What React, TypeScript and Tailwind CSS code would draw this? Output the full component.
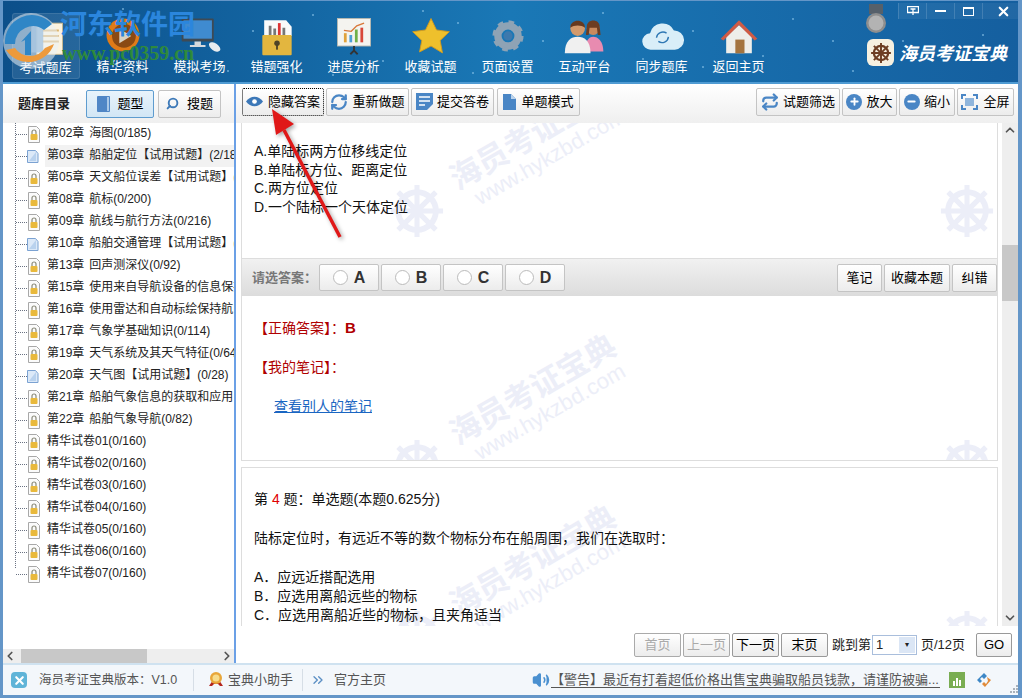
import { ChevronDown, ChevronLeft, ChevronRight, ChevronUp, ChevronsRight, Minus, Plus, RefreshCw, Repeat, Search, Volume2, X } from 'lucide-react';

const font = 'font-["Liberation_Sans","Noto_Sans_CJK_SC",sans-serif]';

const navItems = ['考试题库', '精华资料', '模拟考场', '错题强化', '进度分析', '收藏试题', '页面设置', '互动平台', '同步题库', '返回主页'];

const chapters = [
  ['第02章 海图(0/185)', true],
  ['第03章 船舶定位【试用试题】(2/185)', false],
  ['第05章 天文船位误差【试用试题】(0/120)', true],
  ['第08章 航标(0/200)', true],
  ['第09章 航线与航行方法(0/216)', true],
  ['第10章 船舶交通管理【试用试题】(0/90)', false],
  ['第13章 回声测深仪(0/92)', true],
  ['第15章 使用来自导航设备的信息保持航向', true],
  ['第16章 使用雷达和自动标绘保持航向', true],
  ['第17章 气象学基础知识(0/114)', true],
  ['第19章 天气系统及其天气特征(0/64)', true],
  ['第20章 天气图【试用试题】(0/28)', false],
  ['第21章 船舶气象信息的获取和应用', true],
  ['第22章 船舶气象导航(0/82)', true],
  ['精华试卷01(0/160)', true],
  ['精华试卷02(0/160)', true],
  ['精华试卷03(0/160)', true],
  ['精华试卷04(0/160)', true],
  ['精华试卷05(0/160)', true],
  ['精华试卷06(0/160)', true],
  ['精华试卷07(0/160)', true],
] as const;

const dots = [[120, 8], [250, 30], [310, 14], [380, 60], [455, 22], [540, 40], [600, 12], [690, 30], [760, 55], [790, 18], [830, 40], [850, 70], [700, 66], [470, 72], [130, 74], [560, 70], [640, 58], [900, 40], [980, 34], [420, 10], [330, 74], [225, 70]];

const btn = 'flex items-center justify-center rounded-[2px] border border-[#c4c4c4] bg-gradient-to-b from-white to-[#ececec] text-[13px] text-black whitespace-nowrap';

function NavIcon({ index }: { index: number }) {
  const size = 44;
  if (index === 0) return (
    <svg width={size} height={size} viewBox="0 0 48 48"><rect x="14" y="10" width="28" height="34" fill="#fbf3e0" stroke="#c9b78f" /><path d="M20 18h18M20 24h18M20 30h18" stroke="#d9b26a" strokeWidth="2" /><rect x="8" y="6" width="13" height="36" fill="#5d95c9" opacity=".85" /></svg>
  );
  if (index === 1) return (
    <svg width={size} height={size} viewBox="0 0 48 48"><circle cx="24" cy="24" r="18" fill="#e07b18" /><circle cx="25" cy="25" r="13" fill="#8a4a14" /><path d="M20 17l13 8-13 8z" fill="#d9d2c2" /></svg>
  );
  if (index === 2) return (
    <svg width={size} height={size} viewBox="0 0 48 48"><rect x="4" y="6" width="35" height="25" rx="1" fill="#3e4a55" /><rect x="6" y="8" width="31" height="20" fill="#3f8bd0" /><path d="M18 31h7v4h5v2H13v-2h5z" fill="#d5d9dd" /><ellipse cx="40" cy="37" rx="7" ry="4" transform="rotate(35 40 37)" fill="#e8ecef" /></svg>
  );
  if (index === 3) return (
    <svg width={size} height={size} viewBox="0 0 48 48"><path d="M10 8h24l6 7v10H10z" fill="#fafafa" /><path d="M15 24V14h3v10zM20 24V17h3v7zM30 24V16h3v8z" fill="#777" /><path d="M25 24V11h3v13z" fill="#d33" /><rect x="8" y="24" width="32" height="22" rx="1" fill="#e3b63f" /><circle cx="24" cy="33" r="3" fill="#4f4326" /><rect x="23" y="34" width="2" height="6" fill="#4f4326" /></svg>
  );
  if (index === 4) return (
    <svg width={size} height={size} viewBox="0 0 48 48"><rect x="6" y="6" width="36" height="30" fill="#f4f4f0" stroke="#b9b9b0" /><path d="M13 22v10h3V22z" fill="#e0a23a" /><path d="M19 24v8h3v-8z" fill="#4d9fd6" /><path d="M25 18v14h3V18z" fill="#6fb04a" /><path d="M31 16v16h3V16z" fill="#d8483a" /><path d="M13 19l8 1 6-6 8-3" fill="none" stroke="#d8783a" strokeWidth="1.500" /><path d="M24 36v6M20 45l4-4 4 4" stroke="#333" strokeWidth="2" fill="none" /></svg>
  );
  if (index === 5) return (
    <svg width={size} height={size} viewBox="0 0 48 48"><path d="M24 6l6 12.500 14 1.900-10 9.600 2.500 13.500L24 36l-12.500 6.500L14 30 4 20.400l14-1.900z" fill="#eec02c" stroke="#d39a1c" /></svg>
  );
  if (index === 6) return (
    <svg width={size} height={size} viewBox="0 0 48 48"><circle cx="24" cy="25" r="11" fill="none" stroke="#8ea3b5" strokeWidth="8" /><circle cx="24" cy="25" r="15" fill="none" stroke="#8ea3b5" strokeWidth="4" strokeDasharray="6 5.800" /><circle cx="24" cy="25" r="5" fill="#3d79ad" /></svg>
  );
  if (index === 7) return (
    <svg width={size} height={size} viewBox="0 0 48 48"><circle cx="33" cy="17" r="7" fill="#c98a5e" /><path d="M26 15c0-9 14-9 14 0l1 9h-3l-1-8h-8l-1 8h-3z" fill="#6d3d22" /><path d="M24 42c0-11 4-16 9-16s11 5 11 16z" fill="#e88bb0" /><circle cx="16" cy="17" r="8" fill="#d29a6c" /><path d="M8 16c0-10 16-10 16 0-4-3-12-3-16 0z" fill="#65391f" /><path d="M2 44c0-14 7-18 14-18s14 4 14 18z" fill="#f0f0f0" /></svg>
  );
  if (index === 8) return (
    <svg width={size} height={size} viewBox="0 0 48 48"><path d="M12 40a9 9 0 01-1-18 14 14 0 0126-3 10.500 10.500 0 011 21z" fill="#d9eef8" /><path d="M18 27a7 7 0 0111-5M31 26a7 7 0 01-11 5" fill="none" stroke="#2f78b4" strokeWidth="1.500" /></svg>
  );
  return (
    <svg width={size} height={size} viewBox="0 0 48 48"><path d="M10 26v18h28V26L24 13z" fill="#eeeeea" /><path d="M4 28L24 8l20 20-3 2L24 13 7 30z" fill="#cf5b45" /><rect x="20" y="29" width="10" height="15" fill="#a4743f" /></svg>
  );
}

function Lock() {
  return (
    <svg width="14" height="17" viewBox="0 0 14 17" className="shrink-0">
      <path d="M1.500.500h8l3 3v13h-11z" fill="#fbfbfb" stroke="#a8a8a8" />
      <path d="M5 8V6a2 2 0 014 0v2" fill="none" stroke="#8a8a7a" strokeWidth="1.200" />
      <rect x="3.500" y="8" width="7" height="6" rx="1" fill="#e9b93c" />
    </svg>
  );
}

function Doc() {
  return (
    <svg width="14" height="17" viewBox="0 0 14 17" className="shrink-0">
      <path d="M.500 2.500h8l2.500 3v9H.500z" fill="#dce9f8" stroke="#7ba2d2" />
      <path d="M2 13l7-9v9z" fill="#b9d2ee" />
    </svg>
  );
}

function Wheel({ size }: { size: number }) {
  return (
    <svg width={size} height={size} viewBox="0 0 40 40">
      <circle cx="20" cy="20" r="13" fill="none" stroke="currentColor" strokeWidth="4" />
      <circle cx="20" cy="20" r="4.500" fill="currentColor" />
      <path d="M20 2v36M2 20h36M7 7l26 26M33 7L7 33" stroke="currentColor" strokeWidth="3.500" />
    </svg>
  );
}

// zero-size anchor sits on the wheel centre, text is hung off it
function Mark({ className }: { className: string }) {
  return (
    <div className={`absolute h-0 w-0 text-[#eceef8] ${className}`}>
      <div className="absolute -left-[29px] -top-[29px]"><Wheel size={58} /></div>
      <span className="absolute left-[116px] -top-[76px] -translate-x-1/2 -translate-y-1/2 -rotate-30 whitespace-nowrap text-[31px] font-bold leading-none">海员考证宝典</span>
      <span className="absolute left-[133px] -top-[54px] -translate-x-1/2 -translate-y-1/2 -rotate-30 whitespace-nowrap text-[22px] leading-none">www.hykzbd.com</span>
    </div>
  );
}

export default function App() {
  return (
    <div className={`${font} relative flex h-[698px] w-[1022px] flex-col overflow-hidden bg-[#6496c8] pb-[3px] pl-[3px] pr-[4px] pt-px`}>
      {/* header */}
      <header className="relative flex h-[81px] shrink-0 overflow-hidden bg-gradient-to-r from-[#0c4f8a] via-[#1a78b6] to-[#155f9f] pl-[4px] pt-[12px]">
        <svg className="absolute left-0 top-0" width="1016" height="81">
          {dots.map(([x, y]) => <circle key={`${x}-${y}`} cx={x} cy={y} r="1" fill="#8fc8ec" opacity=".7" />)}
        </svg>
        <div className="relative flex">
          {navItems.map((item, i) => (
            <div key={item} className="flex w-[77px] justify-center">
              <div className={`flex h-[66px] w-[68px] flex-col items-center rounded-[3px] ${i === 0 ? 'border border-white/10 bg-white/10' : ''}`}>
                <div className="flex h-[44px] shrink-0 items-center">
                  <NavIcon index={i} />
                </div>
                <span className="text-[13px] leading-5 text-white">{item}</span>
              </div>
            </div>
          ))}
        </div>
        <div className="absolute right-0 top-[2px] flex h-4 text-white">
          <div className="flex h-[16px] w-7 items-center justify-center border-l border-white/15 bg-white/5">
            <svg width="12" height="10" viewBox="0 0 12 10"><path d="M.500.500h11v6H.500zM6 3v6M3.500 3h5" fill="none" stroke="#fff" strokeWidth="1.300" /></svg>
          </div>
          <div className="flex h-[16px] w-7 items-center justify-center border-l border-white/15 bg-white/5"><div className="h-[2px] w-[11px] bg-white" /></div>
          <div className="flex h-[16px] w-7 items-center justify-center border-l border-white/15 bg-white/5"><div className="h-[9px] w-[11px] border border-t-2 border-white" /></div>
          <div className="flex h-[16px] w-9 items-center justify-center border-l border-white/15 bg-white/5 pl-[5px]"><X size={15} strokeWidth={3.500} /></div>
        </div>
        {/* medal */}
        <svg className="absolute left-[863px] top-[3px]" width="20" height="30" viewBox="0 0 20 30">
          <path d="M3 0h14v10H3z" fill="#56606a" />
          <circle cx="10" cy="19" r="10" fill="#8e8e8e" />
          <circle cx="10" cy="19" r="7.500" fill="#b3b3b3" />
        </svg>
        <div className="absolute left-[864px] top-[38px] flex h-[27px] w-[27px] items-center justify-center rounded-md bg-[#f6f0e0] text-[#6d3d22]">
          <Wheel size={22} />
        </div>
        <span className="absolute left-[896px] top-[43px] text-[18px] font-semibold italic leading-5 text-white">海员考证宝典</span>
      </header>

      <div className="flex min-h-0 flex-1 border-t-2 border-[#4f9bd3]">
        {/* sidebar */}
        <aside className="flex w-[233px] shrink-0 flex-col border-r-2 border-[#6ba0e6] bg-white">
          <div className="flex h-[39px] shrink-0 items-center gap-[4px] bg-gradient-to-b from-white to-[#efefef] pl-[15px]">
            <span className="mr-[12px] text-[13px] font-bold text-[#222]">题库目录</span>
            <div className={`${btn} h-7 w-[68px] gap-2 !border-[#5e9ccf] !from-[#e8f3fb] !to-[#d2e6f5]`}>
              <svg width="13" height="16" viewBox="0 0 13 16"><rect width="13" height="16" rx="1" fill="#4f86c6" /><rect x="10" y="1" width="2" height="14" fill="#a9c8e8" /></svg>
              题型
            </div>
            <div className={`${btn} h-7 w-[63px] gap-2`}>
              <Search size={13} strokeWidth={3.500} className="-scale-x-100 text-[#3d79b8]" />搜题
            </div>
          </div>
          <div className="relative min-h-0 flex-1 overflow-hidden pl-[13px]">
            <div className="absolute bottom-[81px] left-[12px] top-0 border-l border-dotted border-gray-500" />
            {chapters.map(([label, locked], i) => (
              <div key={label} className="flex h-[22px] items-center">
                <div className="w-[11px] shrink-0 border-t border-dotted border-gray-500" />
                {locked ? <Lock /> : <Doc />}
                <span className={`ml-[4px] h-[22px] flex-1 overflow-hidden whitespace-pre pl-[2px] text-[12px] leading-[21px] text-[#222] [word-spacing:1.500px] ${i === 1 ? 'bg-[#f2f2f2]' : ''}`}>{label}</span>
              </div>
            ))}
          </div>
          <div className="flex h-[14px] shrink-0 items-center bg-[#eeeeee] text-[#555]">
            <ChevronLeft size={14} strokeWidth={3} />
            <div className="ml-[4px] h-full w-[126px] bg-[#c8c8c8]" />
            <ChevronRight size={14} strokeWidth={3} className="ml-auto" />
          </div>
        </aside>

        {/* main */}
        <main className="flex min-w-0 flex-1 flex-col bg-white">
          <div className="flex h-[39px] shrink-0 items-center justify-between bg-gradient-to-b from-white to-[#efefef] pb-[4px] pl-[6px] pr-[4px]">
            <div className="flex gap-[2px]">
              <div className={`${btn} h-7 w-[82px] gap-[5px] !border-dotted !border-black`}>
                <svg width="17" height="11" viewBox="0 0 16 10"><path d="M0 5c4-6 12-6 16 0-4 6-12 6-16 0z" fill="#3c78b8" /><circle cx="8" cy="5" r="2.200" fill="#fff" /></svg>
                隐藏答案
              </div>
              <div className={`${btn} h-7 w-[83px] gap-1`}><RefreshCw size={18} strokeWidth={3} className="text-[#4a86c5]" />重新做题</div>
              <div className={`${btn} h-7 w-[83px] gap-1`}>
                <svg width="17" height="17" viewBox="0 0 17 17"><path d="M0 0h17v11l-6 6H0z" fill="#4a86c5" /><path d="M3 4h11M3 8h11M3 12h6" stroke="#fff" strokeWidth="1.300" /></svg>
                提交答卷
              </div>
              <div className={`${btn} ml-px h-7 w-[83px] gap-[5px]`}>
                <svg width="13" height="16" viewBox="0 0 13 16"><path d="M0 0h8l5 5v11H0z" fill="#4a86c5" /><path d="M8 0v5h5z" fill="#bcd4ec" /></svg>
                单题模式
              </div>
            </div>
            <div className="flex gap-[2px]">
              <div className={`${btn} h-7 w-[84px] gap-1`}><Repeat size={18} strokeWidth={3} className="text-[#4a86c5]" />试题筛选</div>
              <div className={`${btn} h-7 w-[55px] gap-1`}><span className="flex h-4 w-4 items-center justify-center rounded-full bg-[#4a86c5] text-white"><Plus size={11} strokeWidth={4} /></span>放大</div>
              <div className={`${btn} h-7 w-[56px] gap-1`}><span className="flex h-4 w-4 items-center justify-center rounded-full bg-[#4a86c5] text-white"><Minus size={11} strokeWidth={4} /></span>缩小</div>
              <div className={`${btn} h-7 w-[57px] gap-[5px]`}>
                <svg width="17" height="16" viewBox="0 0 17 16"><path d="M1 5V1h4M12 1h4v4M16 11v4h-4M5 15H1v-4" fill="none" stroke="#4a86c5" strokeWidth="2" /><rect x="4" y="4" width="9" height="8" fill="#8fb5dc" /></svg>
                全屏
              </div>
            </div>
          </div>

          <div className="flex min-h-0 flex-1 pl-[5px]">
            <div className="flex min-w-0 flex-1 flex-col">
              {/* current question */}
              <div className="flex h-[338px] shrink-0 flex-col border border-t-0 border-[#dddddd]">
                <div className="relative h-[135px] shrink-0 overflow-hidden">
                  <Mark className="left-[175px] top-[88px]" />
                  <Mark className="left-[725px] top-[88px]" />
                  <div className="relative pl-[12px] pt-[19px] text-[14px] leading-[18.500px] text-[#111]">
                    <p>A.单陆标两方位移线定位</p>
                    <p>B.单陆标方位、距离定位</p>
                    <p>C.两方位定位</p>
                    <p>D.一个陆标一个天体定位</p>
                  </div>
                </div>
                <div className="flex h-[38px] shrink-0 items-center justify-between border-t border-[#dddddd] bg-gradient-to-b from-[#f1f1f1] to-[#dcdcdc] pl-[10px]">
                  <div className="flex items-center gap-[2px]">
                    <span className="text-[13px] font-bold text-[#777]">请选答案：</span>
                    {['A', 'B', 'C', 'D'].map(o => (
                      <div key={o} className={`${btn} h-[27px] w-[60px] gap-[6px] !text-[16px] font-bold !text-[#333]`}>
                        <span className="h-[15px] w-[15px] rounded-full border border-[#bbbbbb] bg-white" />{o}
                      </div>
                    ))}
                  </div>
                  <div className="flex gap-[2px]">
                    <div className={`${btn} h-[28px] w-[45px]`}>笔记</div>
                    <div className={`${btn} h-[28px] w-[66px]`}>收藏本题</div>
                    <div className={`${btn} h-[28px] w-[45px]`}>纠错</div>
                  </div>
                </div>
                <div className="relative min-h-0 flex-1 overflow-hidden">
                  <Mark className="left-[175px] top-[170px]" />
                  <Mark className="left-[725px] top-[170px]" />
                  <div className="relative pl-[12px] pt-[22px] text-[14px] leading-5">
                    <p className="text-[#b00000]">【正确答案】：<span className="text-[15px] font-bold">B</span></p>
                    <p className="mt-[19px] text-[#b00000]">【我的笔记】：</p>
                    <p className="ml-[20px] mt-[19px] text-[#1a66c2] underline">查看别人的笔记</p>
                  </div>
                </div>
              </div>
              {/* next question */}
              <div className="relative mt-[6px] min-h-0 flex-1 overflow-hidden border border-b-0 border-[#dddddd]">
                <Mark className="left-[175px] top-[169px]" />
                <Mark className="left-[725px] top-[169px]" />
                <div className="relative pl-[12px] pt-[22px] text-[14px] leading-[19px] text-[#111]">
                  <p>第 <span className="text-[#e00000]">4</span> 题：单选题(本题0.625分)</p>
                  <p className="mt-[20px]">陆标定位时，有远近不等的数个物标分布在船周围，我们在选取时：</p>
                  <p className="mt-[20px]">A．应远近搭配选用</p>
                  <p>B．应选用离船远些的物标</p>
                  <p>C．应选用离船近些的物标，且夹角适当</p>
                </div>
              </div>
            </div>
            <div className="ml-1 flex w-[16px] shrink-0 flex-col items-center bg-[#eeeeee] text-[#555]">
              <ChevronUp size={14} strokeWidth={3} />
              <div className="mt-[108px] h-[56px] w-full bg-[#c8c8c8]" />
              <ChevronDown size={14} strokeWidth={3} className="mb-px mt-auto" />
            </div>
          </div>

          {/* pager */}
          <div className="flex h-[37px] shrink-0 items-center justify-end pr-[6px] text-[13px] text-[#222]">
            <div className={`${btn} h-6 w-[47px] !border-[#aaaaaa] !text-[#aaaaaa]`}>首页</div>
            <div className={`${btn} ml-[2px] h-6 w-[47px] !border-[#aaaaaa] !text-[#aaaaaa]`}>上一页</div>
            <div className={`${btn} ml-[2px] h-6 w-[47px] !border-[#999999]`}>下一页</div>
            <div className={`${btn} ml-[2px] h-6 w-[47px] !border-[#999999]`}>末页</div>
            <span className="ml-1">跳到第</span>
            <div className="ml-px flex h-[20px] w-[45px] items-center justify-between border border-[#a9bedc] pl-[3px] pr-px">1<span className="flex h-4 w-4 items-center justify-center bg-[#dbe6f5] text-[8px]">▾</span></div>
            <span className="ml-1 mr-[11px]">页/12页</span>
            <div className={`${btn} h-6 w-[36px] !border-[#999999]`}>GO</div>
          </div>
        </main>
      </div>

      {/* status bar */}
      <footer className="relative flex h-[32px] shrink-0 items-center border-t-2 border-[#cfe2f0] bg-[#f3f7fb] text-[13px] text-[#555]">
        <div className="ml-[8px] flex h-4 w-4 items-center justify-center rounded-sm bg-[#5fb4d8] text-white"><X size={13} strokeWidth={4} /></div>
        <span className="ml-3 w-[154px] text-[12.500px]">海员考证宝典版本：V1.0</span>
        <div className="h-[22px] border-l border-[#d6dee6]" />
        <svg className="ml-[14px]" width="16" height="18" viewBox="0 0 16 18"><path d="M1 15l4-6 6 0 4 6-3 0-2-2-4 0-2 2z" fill="#b3261e" /><circle cx="8" cy="7" r="6" fill="#e8a63a" /><circle cx="8" cy="7" r="3.500" fill="#f7dc8c" /></svg>
        <span className="ml-[4px] w-[72px]">宝典小助手</span>
        <div className="ml-[2px] h-[22px] border-l border-[#d6dee6]" />
        <ChevronsRight size={16} className="ml-[7px] text-[#5b8fc4]" />
        <span className="ml-[8px]">官方主页</span>
        <Volume2 size={18} className="ml-[146px] fill-[#4a90d0] text-[#4a90d0]" />
        <span className="ml-[1px] w-[389px] shrink-0 overflow-hidden whitespace-nowrap border-b border-[#555] leading-[15px]">【警告】最近有打着超低价格出售宝典骗取船员钱款，请谨防被骗...</span>
        <div className="ml-[9px] flex h-4 w-4 items-end justify-center gap-px bg-[#79ad52] pb-[2px]">
          <div className="h-[5px] w-[2px] bg-white" /><div className="h-[8px] w-[2px] bg-white" /><div className="h-[6px] w-[2px] bg-white" />
        </div>
        <svg className="ml-[11px]" width="16" height="16" viewBox="0 0 16 16"><path d="M8 1l3 3-3 3-2-2-2 2 2 2-2 2-3-3z" fill="#3d87c6" /><path d="M11 5l4 3-6 7-3-3 2-2 2 2 2-3z" fill="#e08a3a" /></svg>
        <svg className="absolute bottom-[2px] right-0" width="8" height="8" viewBox="0 0 8 8"><path d="M6 0h2v2H6zM3 3h2v2H3zM6 3h2v2H6zM0 6h2v2H0zM3 6h2v2H3zM6 6h2v2H6z" fill="#aab2ba" /></svg>
      </footer>

      {/* site watermark stamped over the header */}
      <svg className="absolute left-[2px] top-[12px]" width="58" height="58" viewBox="0 0 58 58">
        <circle cx="29" cy="29" r="28" fill="#e9f1f6" opacity=".55" />
        <path d="M3 32A27 27 0 0150 12L42 18A18 18 0 0013 32z" fill="#2f86c6" />
        <path d="M13 36a18 18 0 0030 0l9-4a27 27 0 01-48 6z" fill="#ed9a3c" />
        <path d="M19 30l10-11v24h-6V28z" fill="#2f86c6" />
      </svg>
      <span className="absolute left-[60px] top-[9px] text-[27px] font-bold leading-8 text-[#2b86dd]">河东软件园</span>
      <span className='absolute left-[62px] top-[43px] font-["Liberation_Serif",serif] text-[20px] font-bold leading-5 text-[#2f8a3c]'>www.pc0359.cn</span>

      {/* annotation arrow on top of the toolbar */}
      <svg className="absolute left-[260px] top-[100px] drop-shadow-[2px_2px_2px_rgba(0,0,0,0.35)]" width="100" height="150" viewBox="0 0 100 150">
        <path d="M80 137L24 30" stroke="#e01818" strokeWidth="3.500" />
        <path d="M12 9L34 24 16 35z" fill="#e01818" />
      </svg>
    </div>
  );
}
